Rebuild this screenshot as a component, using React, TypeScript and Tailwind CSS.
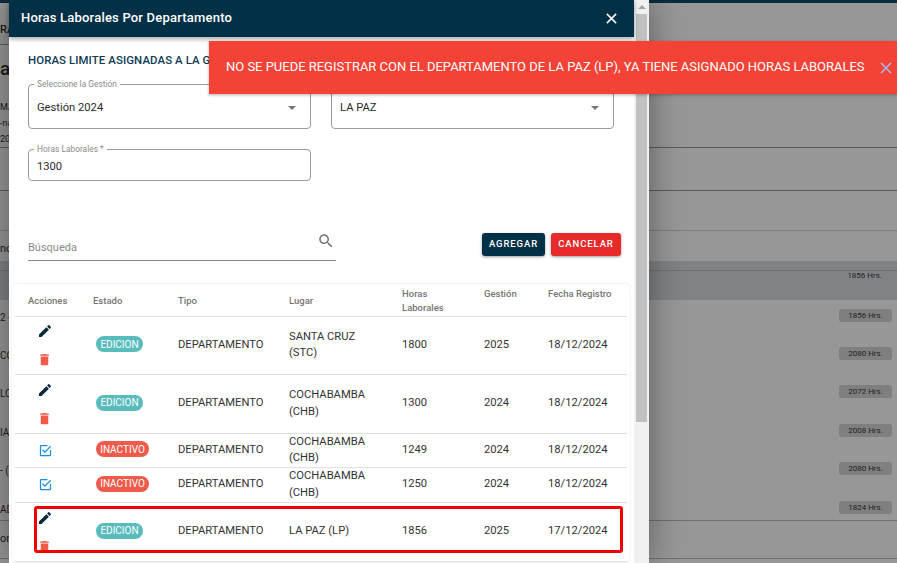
import type { ReactNode } from 'react';

const editPath = 'M3 17.25V21h3.75L17.81 9.94l-3.75-3.75L3 17.25zM20.71 7.04c.39-.39.39-1.02 0-1.41l-2.34-2.34c-.39-.39-1.02-.39-1.41 0l-1.83 1.83 3.75 3.75 1.83-1.83z';
const trashPath = 'M6 19c0 1.1.9 2 2 2h8c1.1 0 2-.9 2-2V7H6v12zM19 4h-3.5l-1-1h-5l-1 1H5v2h14V4z';
const checkPath = 'M19 19H5V5h10V3H5c-1.11 0-2 .89-2 2v14a2 2 0 0 0 2 2h14a2 2 0 0 0 2-2v-8h-2m-11.09-.92L6.5 11.5 11 16 21 6l-1.41-1.42L11 13.17z';
const searchPath = 'M15.5 14h-.79l-.28-.27C15.41 12.59 16 11.11 16 9.5 16 5.91 13.09 3 9.5 3S3 5.91 3 9.5 5.91 16 9.5 16c1.61 0 3.09-.59 4.23-1.57l.27.28v.79l5 4.99L20.49 19l-4.99-5zm-6 0C7.01 14 5 11.99 5 9.5S7.01 5 9.5 5 14 7.01 14 9.5 11.99 14 9.5 14z';

function Icon({ d, className }: { d: string; className: string }) {
    return (
        <svg viewBox="0 0 24 24" fill="currentColor" className={className}>
            <path d={d} />
        </svg>
    );
}

function Caret() {
    return <span className="h-0 w-0 border-x-[4px] border-t-[4px] border-x-transparent border-t-[#757575]" />;
}

function Field({ label, height, className, children }: { label?: string; height: string; className: string; children: ReactNode }) {
    return (
        <fieldset className={`${height} ${className} w-[283px] rounded border border-[#9b9b9b] px-[8px]`}>
            {label && <legend className="-ml-[3px] px-[3px] text-[8.4px] leading-[9px] text-[#8a8a8a]">{label}</legend>}
            {children}
        </fieldset>
    );
}

type Row = { estado: 'EDICION' | 'INACTIVO'; lugar: string[]; horas: string; gestion: string; fecha: string; height: string };

const rows: Row[] = [
    { estado: 'EDICION', lugar: ['SANTA CRUZ', '(STC)'], horas: '1800', gestion: '2025', fecha: '18/12/2024', height: 'h-[58px]' },
    { estado: 'EDICION', lugar: ['COCHABAMBA', '(CHB)'], horas: '1300', gestion: '2024', fecha: '18/12/2024', height: 'h-[59px]' },
    { estado: 'INACTIVO', lugar: ['COCHABAMBA', '(CHB)'], horas: '1249', gestion: '2024', fecha: '18/12/2024', height: 'h-[34px]' },
    { estado: 'INACTIVO', lugar: ['COCHABAMBA', '(CHB)'], horas: '1250', gestion: '2024', fecha: '18/12/2024', height: 'h-[35px]' },
    { estado: 'EDICION', lugar: ['LA PAZ (LP)'], horas: '1856', gestion: '2025', fecha: '17/12/2024', height: 'h-[59px]' },
];

const backdropRows = [
    { text: '2 -', hours: '1856 Hrs.', height: 'h-[38px]' },
    { text: 'CO', hours: '2080 Hrs.', height: 'h-[38px]' },
    { text: 'LO', hours: '2072 Hrs.', height: 'h-[39px]' },
    { text: 'IA', hours: '2008 Hrs.', height: 'h-[38px]' },
    { text: '- (', hours: '2080 Hrs.', height: 'h-[39px]' },
    { text: 'AD', hours: '1824 Hrs.', height: 'h-[28px]' },
];

function Backdrop() {
    return (
        <div className="flex h-full flex-col bg-[#979797] text-[#1a1a1a]">
            <div className="h-[3px] bg-[#0c2c3e]" />
            <div className="flex h-[42px] items-end border-b border-[#5c5c5c] pb-[6px] text-[11px] font-medium">RA</div>
            <div className="h-[103px] border-b border-[#5c5c5c]">
                <div className="mt-[13px] text-[19px] font-medium leading-[22px]">a</div>
                <div className="mt-[19px] text-[9px] leading-[16px]">MA</div>
                <div className="text-[9px] leading-[16px]">-na</div>
                <div className="text-[9px] leading-[16px]">20</div>
            </div>
            <div className="h-[43px] border-b border-[#5c5c5c]" />
            <div className="h-[40px] border-b border-[#7d7d7d]" />
            <div className="flex h-[30px] items-end pb-[4px] text-[11px]">no</div>
            <div className="h-[39px] bg-[#7f8386] pt-[9px]">
                <div className="border-b border-[#6f7274]" />
                <div className="flex justify-end pr-[15px]">
                    <span className="text-[8px] leading-[10px] text-[#222]">1856 Hrs.</span>
                </div>
            </div>
            {backdropRows.map((row, i) => (
                <div key={i} className={`${row.height} flex items-start justify-between pr-[5px] text-[10px] leading-[15px]`}>
                    <span className="mt-[10px]">{row.text}</span>
                    <span className="mt-[9px] flex h-[13px] w-[53px] items-center justify-center rounded-[3px] bg-[#7f7f7f] text-[8px] text-[#222]">{row.hours}</span>
                </div>
            ))}
            <div className="flex h-[39px] items-center border-y border-[#6f6f6f] text-[11px]">on</div>
        </div>
    );
}

function RowActions({ estado }: { estado: Row['estado'] }) {
    if (estado === 'INACTIVO') {
        return <Icon d={checkPath} className="ml-[10px] size-[15px] text-[#1a8fdc]" />;
    }
    return (
        <div className="ml-[9px] flex flex-col gap-[13px]">
            <Icon d={editPath} className="size-[16px] text-[#06283d]" />
            <Icon d={trashPath} className="size-[15px] text-[#ef5a4a]" />
        </div>
    );
}

export default function App() {
    return (
        <div className="relative h-[563px] w-[897px] overflow-hidden font-['Roboto',sans-serif]">
            <Backdrop />

            {/* Dialog */}
            <div className="absolute inset-y-0 left-[9px] w-[640px] bg-white shadow-[0_0_32px_rgba(0,0,0,0.4)]">
                <div className="flex h-full">
                    <div className="relative w-[625px]">
                        <header className="flex h-[37px] items-center justify-between bg-[#023047] pb-[1px] pl-[12px] pr-[16px] shadow-[0_2px_5px_rgba(0,0,0,0.35)]">
                            <h2 className="text-[13px] font-medium tracking-[0.2px] text-white">Horas Laborales Por Departamento</h2>
                            <svg viewBox="0 0 14 14" className="size-[13px] text-white" fill="none" stroke="currentColor" strokeWidth="1.6">
                                <path d="M2 2l10 10M12 2L2 12" />
                            </svg>
                        </header>

                        <div className="pl-[19px]">
                            <h3 className="mt-[16px] whitespace-nowrap text-[11.4px] font-medium leading-[14px] tracking-[0.1px] text-[#0d3a52]">HORAS LIMITE ASIGNADAS A LA GESTION</h3>

                            <div className="mt-[13px] flex gap-[20px] text-[11.2px] text-[#2b2b2b]">
                                <Field label="Seleccione la Gestión" height="h-[49px]" className="">
                                    <div className="flex items-center justify-between pr-[6px] pt-[12px] leading-[14px]">
                                        <span>Gestión 2024</span>
                                        <Caret />
                                    </div>
                                </Field>
                                <Field label="Departamento" height="h-[49px]" className="">
                                    <div className="flex items-center justify-between pr-[6px] pt-[12px] leading-[14px]">
                                        <span>LA PAZ</span>
                                        <Caret />
                                    </div>
                                </Field>
                            </div>

                            <Field label="Horas Laborales *" height="h-[36px]" className="mt-[16px] text-[11.2px] text-[#2b2b2b]">
                                <div className="pt-[6px] leading-[14px]">1300</div>
                            </Field>

                            <div className="mt-[52px] flex h-[28px]">
                                <div className="relative h-[28px] w-[308px] border-b border-[#8a8a8a]">
                                    <span className="absolute bottom-[4px] left-0 text-[11px] text-[#8a8a8a]">Búsqueda</span>
                                    <Icon d={searchPath} className="absolute right-[1px] -top-[1px] size-[18px] text-[#757575]" />
                                </div>
                                <div className="ml-[146px] flex h-[23px] gap-[6px] text-[9.5px] font-medium tracking-[0.9px] text-white">
                                    <button className="w-[63px] rounded-[3px] bg-[#023047] shadow-[0_1px_3px_rgba(0,0,0,0.4)]">AGREGAR</button>
                                    <button className="w-[70px] rounded-[3px] bg-[#e62b2b] shadow-[0_1px_3px_rgba(0,0,0,0.4)]">CANCELAR</button>
                                </div>
                            </div>
                        </div>

                        {/* Table card */}
                        <div className="ml-[3px] mt-[23px] w-[618px] rounded-[4px] px-[3px] shadow-[0_0_2px_rgba(0,0,0,0.15)]">
                            <table className="w-[612px] table-fixed border-collapse text-left text-[11.2px] text-[#333]">
                                <colgroup>
                                    <col className="w-[78px]" />
                                    <col className="w-[85px]" />
                                    <col className="w-[111px]" />
                                    <col className="w-[113px]" />
                                    <col className="w-[82px]" />
                                    <col className="w-[64px]" />
                                    <col className="w-[79px]" />
                                </colgroup>
                                <thead>
                                    <tr className="h-[32px] border-b border-[#e0e0e0] text-[9.5px] font-medium leading-[14px] text-[#757575]">
                                        <th className="pl-[13px] pt-[2px] font-medium">Acciones</th>
                                        <th className="pt-[2px] font-medium">Estado</th>
                                        <th className="pt-[2px] font-medium">Tipo</th>
                                        <th className="pt-[2px] font-medium">Lugar</th>
                                        <th className="pt-[2px] font-medium">Horas<br />Laborales</th>
                                        <th className="align-top pt-[3px] font-medium">Gestión</th>
                                        <th className="align-top whitespace-nowrap pt-[3px] font-medium">Fecha Registro</th>
                                    </tr>
                                </thead>
                                <tbody>
                                    {rows.map((row, i) => (
                                        <tr key={i} className={`${row.height} border-b border-[#e0e0e0]`}>
                                            <td className="pl-[13px]"><RowActions estado={row.estado} /></td>
                                            <td>
                                                <span className={`${row.estado === 'EDICION' ? 'w-[47px] bg-[#58bcbc]' : 'w-[53px] bg-[#ef5a4a]'} ml-[3px] inline-flex h-[16px] items-center justify-center rounded-full text-[10px] text-white`}>
                                                    {row.estado}
                                                </span>
                                            </td>
                                            <td>DEPARTAMENTO</td>
                                            <td className="leading-[16.5px]">{row.lugar.map((line) => <div key={line}>{line}</div>)}</td>
                                            <td>{row.horas}</td>
                                            <td>{row.gestion}</td>
                                            <td>{row.fecha}</td>
                                        </tr>
                                    ))}
                                </tbody>
                            </table>
                        </div>

                        {/* Highlight around the last row */}
                        <div className="absolute left-[25px] top-[506px] h-[47px] w-[589px] rounded-[3px] border-[3px] border-[#f00000]" />
                    </div>

                    {/* Scrollbar */}
                    <div className="flex w-[15px] flex-col items-center bg-[#f1f1f1]">
                        <span className="mt-[5px] h-0 w-0 border-x-[4px] border-b-[4px] border-x-transparent border-b-[#a3a3a3]" />
                        <div className="mt-[5px] h-[408px] w-[11px] bg-[#c1c1c1]" />
                    </div>
                </div>
            </div>

            {/* Toast */}
            <div className="absolute left-[209px] right-0 top-[41px] flex h-[53px] items-center bg-[#f44336] pb-[2px] pl-[17px] pr-[5px] shadow-[0_1px_3px_rgba(0,0,0,0.3)]">
                <span className="whitespace-nowrap text-[12.98px] text-white">NO SE PUEDE REGISTRAR CON EL DEPARTAMENTO DE LA PAZ (LP), YA TIENE ASIGNADO HORAS LABORALES</span>
                <svg viewBox="0 0 12 12" className="ml-auto mt-[3px] size-[12px] text-[#a3b8ee]" fill="none" stroke="currentColor" strokeWidth="1.5">
                    <path d="M1 1l10 10M11 1L1 11" />
                </svg>
            </div>
        </div>
    );
}
